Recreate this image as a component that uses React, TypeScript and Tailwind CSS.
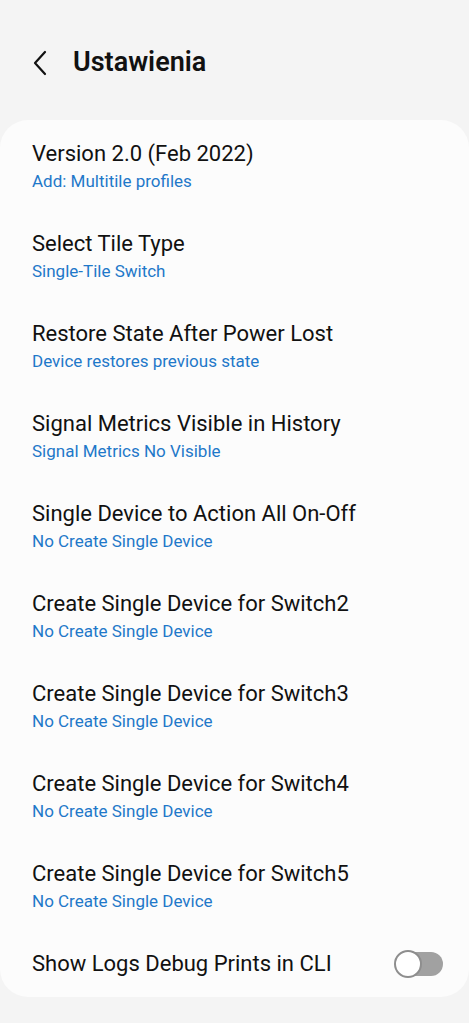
import React from "react";

const items = [
  ["Version 2.0 (Feb 2022)", "Add: Multitile profiles"],
  ["Select Tile Type", "Single-Tile Switch"],
  ["Restore State After Power Lost", "Device restores previous state"],
  ["Signal Metrics Visible in History", "Signal Metrics No Visible"],
  ["Single Device to Action All On-Off", "No Create Single Device"],
  ["Create Single Device for Switch2", "No Create Single Device"],
  ["Create Single Device for Switch3", "No Create Single Device"],
  ["Create Single Device for Switch4", "No Create Single Device"],
  ["Create Single Device for Switch5", "No Create Single Device"],
];

export default function App() {
  return (
    <div
      className="w-[469px] h-[1023px] bg-[#f4f4f4] overflow-hidden"
      style={{ fontFamily: "Roboto, 'Noto Sans', sans-serif" }}
    >
      <div className="h-[120px] flex items-start pt-[47px] pl-[30px]">
        <svg width="20" height="28" viewBox="0 0 20 28" className="mt-[2px]">
          <path d="M15 3 L5 14 L15 25" fill="none" stroke="#111" strokeWidth="2.2" strokeLinecap="round" strokeLinejoin="round" />
        </svg>
        <div className="ml-[23px] text-[27px] leading-[30px] font-semibold text-[#111]">Ustawienia</div>
      </div>
      <div className="bg-[#fcfcfc] rounded-[28px] pt-[21px] pb-[20px] px-[32px]">
        {items.map(([t, s]) => (
          <div key={t} className="h-[90px] flex flex-col">
            <div className="text-[22px] leading-[26px] text-[#111]">{t}</div>
            <div className="mt-[4px] text-[17px] leading-[20px] text-[#1f78c9]">{s}</div>
          </div>
        ))}
        <div className="h-[26px] flex items-center justify-between">
          <div className="text-[22px] leading-[26px] text-[#111]">Show Logs Debug Prints in CLI</div>
          <div className="relative w-[49px] h-[28px] mr-[-6px] flex items-center justify-end">
            <div className="w-[46px] h-[24px] rounded-full bg-[#a1a1a1]" />
            <div className="absolute left-0 top-0 w-[28px] h-[28px] rounded-full bg-white border-2 border-[#8e8e8e]" />
          </div>
        </div>
      </div>
    </div>
  );
}
